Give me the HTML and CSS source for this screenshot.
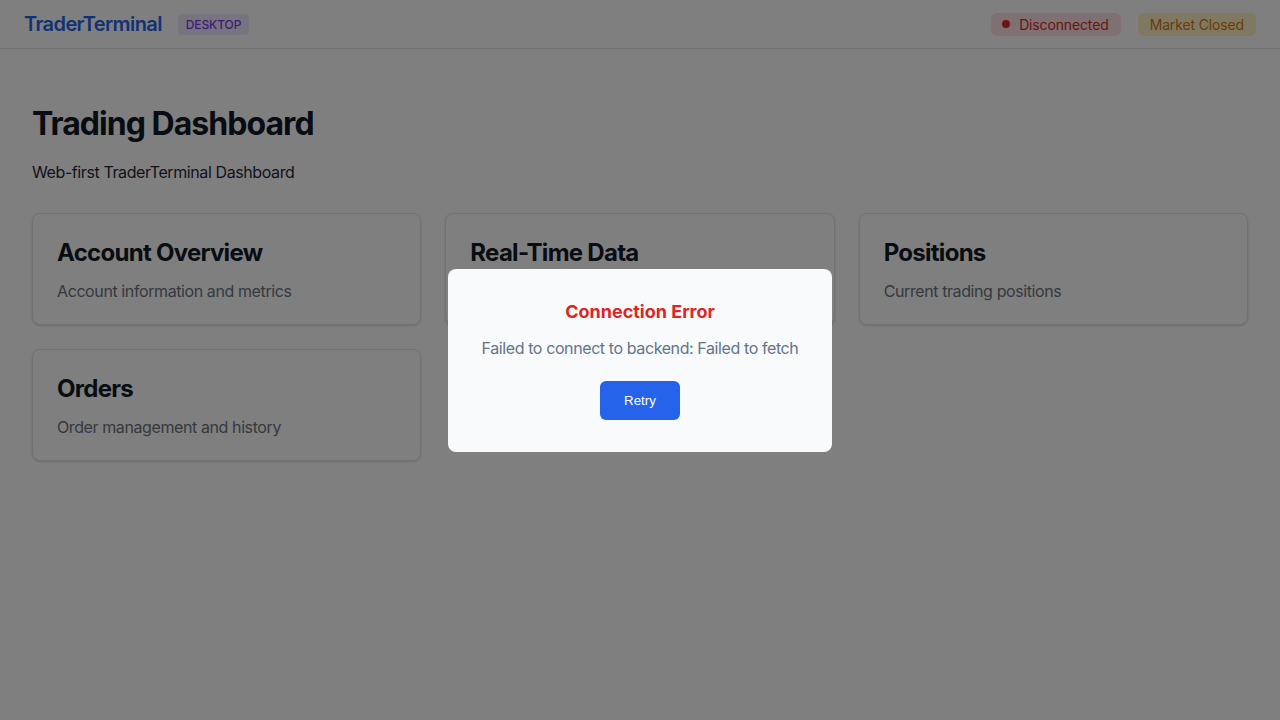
FILE: index.html
```html
<!DOCTYPE html>
<html lang="en">
<head>
<meta charset="utf-8">
<title>TraderTerminal</title>
<link rel="stylesheet" href="styles.css">
</head>
<body>
<header class="topbar">
  <div class="brand">
    <span class="logo">TraderTerminal</span>
    <span class="platform">DESKTOP</span>
  </div>
  <div class="status">
    <span class="pill pill-red"><span class="dot"></span>Disconnected</span>
    <span class="pill pill-amber">Market Closed</span>
  </div>
</header>
<main class="main">
  <h1 class="page-title">Trading Dashboard</h1>
  <p class="page-sub">Web-first TraderTerminal Dashboard</p>
  <section class="grid">
    <div class="card"><h2 class="card-title">Account Overview</h2><p class="card-desc">Account information and metrics</p></div>
    <div class="card"><h2 class="card-title">Real-Time Data</h2><p class="card-desc">Live market data streams</p></div>
    <div class="card"><h2 class="card-title">Positions</h2><p class="card-desc">Current trading positions</p></div>
    <div class="card"><h2 class="card-title">Orders</h2><p class="card-desc">Order management and history</p></div>
  </section>
</main>
<div class="overlay">
  <div class="modal">
    <h2 class="modal-title">Connection Error</h2>
    <p class="modal-msg">Failed to connect to backend: Failed to fetch</p>
    <button class="retry">Retry</button>
  </div>
</div>
</body>
</html>
```
FILE: styles.css
```css
html, body {
  margin: 0;
  padding: 0;
}
body {
  font-family: Inter, "Noto Sans", sans-serif;
  letter-spacing: -0.025em;
  background: #ffffff;
  color: #111827;
  width: 1280px;
  height: 720px;
  overflow: hidden;
}
.topbar {
  height: 48px;
  border-bottom: 1px solid #e5e7eb;
  background: #ffffff;
  display: flex;
  align-items: center;
  justify-content: space-between;
  padding: 0 24px;
}
.brand {
  display: flex;
  align-items: center;
  gap: 16px;
}
.logo {
  font-size: 20px;
  font-weight: 600;
  color: #2563eb;
  letter-spacing: -0.03em;
}
.platform {
  font-size: 12px;
  font-weight: 500;
  color: #7c3aed;
  background: #ede9fe;
  padding: 3px 8px;
  border-radius: 4px;
  line-height: 15px;
  letter-spacing: -0.01em;
}
.status {
  display: flex;
  align-items: center;
  gap: 17px;
}
.pill {
  display: inline-flex;
  align-items: center;
  font-size: 14px;
  padding: 3px 12px;
  border-radius: 6px;
  line-height: 17px;
  letter-spacing: -0.01em;
}
.pill-red {
  background: #fee2e2;
  color: #dc2626;
  padding-left: 11px;
}
.dot {
  width: 8px;
  height: 8px;
  border-radius: 50%;
  background: #dc2626;
  margin-right: 9px;
}
.pill-amber {
  background: #fef3c7;
  color: #d97706;
}
.main {
  padding: 32px;
}
.page-title {
  font-size: 32px;
  font-weight: 700;
  margin: 24px 0 19px;
  line-height: 1.2;
  color: #111827;
  letter-spacing: -0.03em;
}
.page-sub {
  font-size: 16px;
  margin: 0;
  color: #1f2937;
}
.grid {
  margin-top: 31px;
  display: grid;
  grid-template-columns: repeat(3, 1fr);
  gap: 24px;
}
.card {
  border: 1px solid #e5e7eb;
  border-radius: 8px;
  padding: 24px 24px 23px;
  background: #ffffff;
  box-shadow: 0 1px 3px rgba(0,0,0,0.1), 0 1px 2px rgba(0,0,0,0.06);
}
.card-title {
  font-size: 24px;
  font-weight: 700;
  margin: 0 0 14px;
  color: #111827;
  letter-spacing: -0.03em;
}
.card-desc {
  font-size: 16px;
  margin: 0;
  color: #6b7280;
}
.overlay {
  position: fixed;
  inset: 0;
  background: rgba(0,0,0,0.5);
  display: flex;
  align-items: center;
  justify-content: center;
}
.modal {
  width: 320px;
  padding: 32px;
  background: #f8fafc;
  border-radius: 8px;
  text-align: center;
}
.modal-title {
  font-size: 18px;
  font-weight: 700;
  color: #dc2626;
  margin: 0 0 16px;
  letter-spacing: 0;
}
.modal-msg {
  font-size: 16px;
  color: #64748b;
  margin: 0 0 23px;
  white-space: nowrap;
}
.retry {
  font-family: "Liberation Sans", Arial, sans-serif;
  font-size: 13.333px;
  letter-spacing: 0;
  background: #2563eb;
  color: #ffffff;
  border: none;
  border-radius: 6px;
  padding: 12px 24px;
  cursor: pointer;
}
```
